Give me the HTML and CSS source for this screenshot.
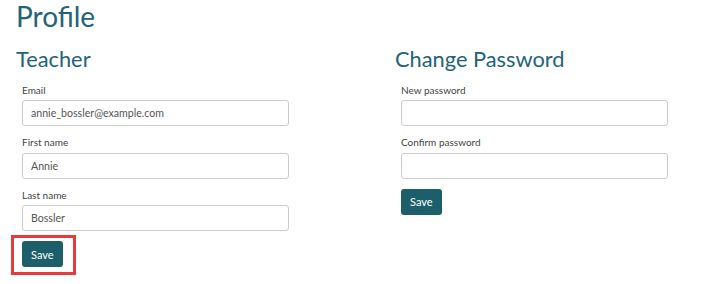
FILE: index.html
```html
<!DOCTYPE html>
<html lang="en">

<head>
  <meta charset="UTF-8">
  <title>Profile</title>
  <link rel="stylesheet" href="styles.css">
</head>

<body>
  <div class="page">
    <h1>Profile</h1>
    <div class="columns">
      <!-- 个人信息 -->
      <div class="column">
        <h2>Teacher</h2>
        <div class="field">
          <label>Email</label>
          <input type="text" value="annie_bossler@example.com">
        </div>
        <div class="field">
          <label>First name</label>
          <input type="text" value="Annie">
        </div>
        <div class="field">
          <label>Last name</label>
          <input type="text" value="Bossler">
        </div>
        <div class="actions">
          <div class="highlight">
            <input type="button" class="btn" value="Save">
          </div>
        </div>
      </div>
      <!-- 修改密码 -->
      <div class="column">
        <h2>Change Password</h2>
        <div class="field">
          <label>New password</label>
          <input type="password">
        </div>
        <div class="field">
          <label>Confirm password</label>
          <input type="password">
        </div>
        <div class="actions">
          <input type="button" class="btn" value="Save">
        </div>
      </div>
    </div>
  </div>
</body>

</html>
```

FILE: styles.css
```css
body {
  margin: 0;
  padding: 0;
  background-color: #FFF;
  font-family: Lato, "Liberation Sans", sans-serif;
}

.page {
  padding: 0 16px 12px;
}

h1 {
  margin: 0;
  font-size: 28px;
  font-weight: 400;
  line-height: 1.2;
  color: #22637a;
}

h2 {
  margin: 12px 0 12px;
  font-size: 21.8px;
  font-weight: 400;
  line-height: 1.2;
  color: #22637a;
}

.columns {
  display: flex;
}

.column {
  flex: 0 0 379px;
}

.column + .column {
  flex: 1;
}

.field {
  padding-left: 6px;
  margin-bottom: 10px;
}

.field label {
  display: block;
  font-size: 10px;
  line-height: 13px;
  margin-bottom: 3.5px;
  color: #444;
}

.field input {
  display: block;
  width: 267px;
  height: 26px;
  padding: 0 8px;
  box-sizing: border-box;
  border: 1px solid #CCC;
  border-radius: 3px;
  font-family: Lato, "Liberation Sans", sans-serif;
  font-size: 10.6px;
  color: #555;
  outline: none;
}

.actions {
  padding-left: 6px;
}

.btn {
  display: block;
  height: 26px;
  padding: 0 9px;
  border: none;
  border-radius: 3px;
  background-color: #1c5f6b;
  color: #FFF;
  font-family: Lato, "Liberation Sans", sans-serif;
  font-size: 11px;
  cursor: pointer;
}

.highlight {
  width: fit-content;
  margin: -6px 0 -8px -11px;
  padding: 3px 10px 5px 8px;
  border: 3px solid #e8393c;
}
```
